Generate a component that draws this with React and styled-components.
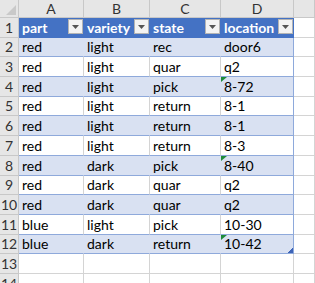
import React from "react";
import styled, { createGlobalStyle } from "styled-components";

const GlobalStyle = createGlobalStyle`
  html, body { margin: 0; padding: 0; background: #ffffff; overflow: hidden; }
  body { font-family: Lato, "Open Sans", "Liberation Sans", sans-serif; }
`;

const GRID = "#d4d4d4";
const HEAD_BG = "#e6e6e6";
const HEAD_LINE = "#c8c8c8";
const TABLE_BLUE = "#4472c4";
const BAND = "#d9e1f2";
const BAND_LINE = "#8ea9db";

const Sheet = styled.div`
  display: grid;
  grid-template-columns: 19px 65px 66px 71px 73px 1fr;
  grid-template-rows: 18px;
  grid-auto-rows: 19.7px;
  width: 315px;
  height: 283px;
  overflow: hidden;
  font-size: 14px;
  color: #000;
`;

const Corner = styled.div`
  box-sizing: border-box;
  background: ${HEAD_BG};
  border-right: 1px solid ${HEAD_LINE};
  border-bottom: 1px solid ${HEAD_LINE};
  display: flex;
  align-items: flex-end;
  justify-content: flex-end;
  padding: 0 2px 2px 0;
`;

const ColHead = styled.div`
  box-sizing: border-box;
  background: ${HEAD_BG};
  border-right: 1px solid ${HEAD_LINE};
  border-bottom: 1px solid ${HEAD_LINE};
  display: flex;
  align-items: center;
  justify-content: center;
  color: #333;
  font-size: 14px;
  line-height: 16px;
`;

const RowHead = styled.div`
  box-sizing: border-box;
  background: ${HEAD_BG};
  border-right: 1px solid ${HEAD_LINE};
  border-bottom: 1px solid ${HEAD_LINE};
  display: flex;
  align-items: flex-end;
  justify-content: center;
  padding-bottom: 1px;
  color: #333;
  font-size: 14px;
  line-height: 17px;
`;

const fills = {
  head: { bg: TABLE_BLUE, bottom: TABLE_BLUE, right: TABLE_BLUE },
  band: { bg: BAND, bottom: BAND_LINE, right: BAND },
  plain: { bg: "#ffffff", bottom: BAND_LINE, right: GRID },
  empty: { bg: "#ffffff", bottom: GRID, right: GRID },
};

const Cell = styled.div`
  position: relative;
  box-sizing: border-box;
  background: ${(p) => fills[p.$tone].bg};
  border-bottom: 1px solid ${(p) => fills[p.$tone].bottom};
  border-right: 1px solid
    ${(p) => (p.$edge ? (p.$tone === "head" ? TABLE_BLUE : BAND_LINE) : fills[p.$tone].right)};
  display: flex;
  align-items: flex-end;
  justify-content: space-between;
  padding: 0 0 1px 3px;
  line-height: 17px;
  white-space: nowrap;
  overflow: visible;
  color: ${(p) => (p.$tone === "head" ? "#ffffff" : "#000000")};
  font-weight: ${(p) => (p.$tone === "head" ? 700 : 400)};
`;

const FilterButton = styled.span`
  box-sizing: border-box;
  align-self: flex-start;
  width: 15px;
  height: 15px;
  margin-top: 1px;
  background: #f3f3f3;
  border: 1px solid #b4b4b4;
  display: flex;
  align-items: center;
  justify-content: center;
`;

const ErrorMark = styled.span`
  position: absolute;
  top: 0;
  left: 0;
  width: 0;
  height: 0;
  border-top: 5px solid #1e8b3a;
  border-right: 6px solid transparent;
`;

const ResizeHandle = styled.svg`
  position: absolute;
  right: 0;
  bottom: 0;
`;

const columns = ["A", "B", "C", "D"];
const headers = ["part", "variety", "state", "location"];
const data = [
  ["red", "light", "rec", "door6"],
  ["red", "light", "quar", "q2"],
  ["red", "light", "pick", "8-72", true],
  ["red", "light", "return", "8-1"],
  ["red", "light", "return", "8-1"],
  ["red", "light", "return", "8-3"],
  ["red", "dark", "pick", "8-40", true],
  ["red", "dark", "quar", "q2"],
  ["red", "dark", "quar", "q2"],
  ["blue", "light", "pick", "10-30"],
  ["blue", "dark", "return", "10-42", true],
];

const Arrow = () => (
  <svg width="7" height="4" viewBox="0 0 7 4">
    <polygon points="0,0 7,0 3.5,4" fill="#555" />
  </svg>
);

export default function App() {
  return (
    <>
      <GlobalStyle />
      <Sheet>
        <Corner>
          <svg width="10" height="10" viewBox="0 0 10 10">
            <polygon points="10,0 10,10 0,10" fill="#c9c9c9" />
          </svg>
        </Corner>
        {columns.map((c) => (
          <ColHead key={c}>{c}</ColHead>
        ))}
        <ColHead />

        <RowHead>1</RowHead>
        {headers.map((h, i) => (
          <Cell key={h} $tone="head" $edge={i === 3}>
            <span>{h}</span>
            <FilterButton>
              <Arrow />
            </FilterButton>
          </Cell>
        ))}
        <Cell $tone="empty" />

        {data.map((row, r) => {
          const tone = r % 2 === 0 ? "band" : "plain";
          const last = r === data.length - 1;
          return (
            <React.Fragment key={r}>
              <RowHead>{r + 2}</RowHead>
              {row.slice(0, 4).map((v, i) => (
                <Cell key={i} $tone={tone} $edge={i === 3}>
                  {i === 3 && row[4] && <ErrorMark />}
                  <span>{v}</span>
                  {i === 3 && last && (
                    <ResizeHandle width="5" height="5" viewBox="0 0 5 5">
                      <polygon points="5,0 5,5 0,5 0,4 1,4 1,3 2,3 2,2 3,2 3,1 4,1 4,0" fill="#3d64b8" />
                    </ResizeHandle>
                  )}
                </Cell>
              ))}
              <Cell $tone="empty" />
            </React.Fragment>
          );
        })}

        {[13, 14].map((n) => (
          <React.Fragment key={n}>
            <RowHead>{n}</RowHead>
            {columns.map((c) => (
              <Cell key={c} $tone="empty" />
            ))}
            <Cell $tone="empty" />
          </React.Fragment>
        ))}
      </Sheet>
    </>
  );
}
